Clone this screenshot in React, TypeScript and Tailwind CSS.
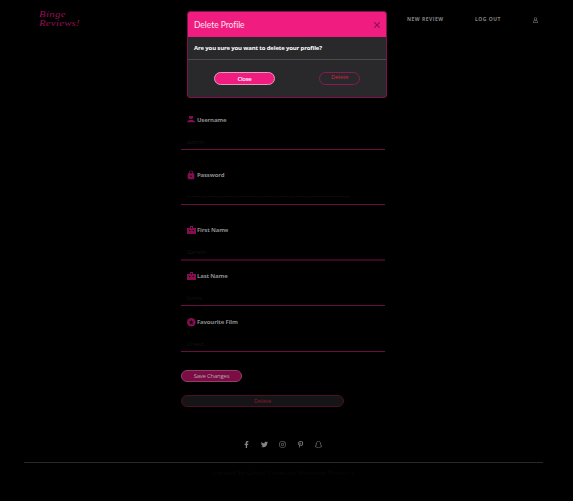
import type { ReactNode } from "react";
import { MdLock } from "react-icons/md";
import { FaFacebookF, FaTwitter, FaInstagram, FaPinterestP, FaRegUser, FaSnapchatGhost } from "react-icons/fa";

function PersonIcon() {
  return (
    <svg viewBox="0 0 8 8" className="h-2 w-2" fill="currentColor">
      <path d="M2 0h1.4l.6.6.6-.6H6v2L5 3H3L2 2zM0 6.2c0-1.7 2-2.2 4-2.2s4 .5 4 2.2z" />
    </svg>
  );
}

function BadgeIcon() {
  return (
    <svg viewBox="0 0 9 9" className="h-[9px] w-[9px]" fill="currentColor">
      <path fillRule="evenodd" d="M3 0h3v2h3v6H0V2h3zM4 1v1.5h1V1zM2 4v1h1.3V4zm3.7 0v1H7V4z" />
    </svg>
  );
}

function StarsIcon() {
  return (
    <svg viewBox="0 0 9 9" className="h-[9px] w-[9px]">
      <circle cx="4.3" cy="4.3" r="4.3" fill="currentColor" />
      <path d="M4.3 1.8l.7 1.6 1.8.1-1.4 1.2.4 1.8-1.5-1-1.5 1 .4-1.8-1.4-1.2 1.8-.1z" fill="black" />
    </svg>
  );
}

interface FieldProps {
  icon: ReactNode;
  label: string;
  value: string;
  gap: string;
  line: string;
}

function Field({ icon, label, value, gap, line }: FieldProps) {
  return (
    <div className={`w-[204px] ${gap}`}>
      <div className="flex h-[10px] items-center pl-[6px] text-[#850e4c]">
        <span className="flex w-[10px] shrink-0 items-center">{icon}</span>
        <span className="text-[6px] leading-[10px] font-bold tracking-[-0.17px] text-[#8a8a8a]">{label}</span>
      </div>
      <div className={`mt-[11px] overflow-hidden pl-[6px] text-[6px] leading-[13px] whitespace-nowrap text-[#131313] ${line}`}>
        {value}
      </div>
    </div>
  );
}

export default function App() {
  return (
    <div className="relative h-[501px] w-[573px] overflow-hidden bg-black font-['Open_Sans','Noto_Sans',sans-serif]">
      <header className="flex h-[38px] items-start justify-between pr-[35px] pl-[39px]">
        <div className="pt-[10px] font-['Liberation_Serif',serif] text-[9px] leading-[9px] text-[#960f55] italic">
          <div className="w-[34px] origin-left scale-x-[1.2] tracking-[0.3px]">Binge</div>
          <div className="w-[34px] origin-left scale-x-[1.2] tracking-[0.2px]">Reviews!</div>
        </div>
        <nav className="flex items-center pt-[15px] text-[5px] leading-[9px] font-bold tracking-[0.5px] text-[#858585]">
          <span className="w-[68px]">NEW REVIEW</span>
          <span className="w-[58px]">LOG OUT</span>
          <FaRegUser className="h-[6px] w-[5px]" />
        </nav>
      </header>

      <main className="flex flex-col pt-[77px] pl-[181px]">
        <Field icon={<PersonIcon />} label="Username" value="admin" gap="" line="h-[14px] border-b border-[#65103f]" />
        <Field icon={<MdLock size={10} className="-ml-px shrink-0" />} label="Password" value="••••••••••••••••••••••••••••••••••••••••••••••••••••••••••••••••••••••••" gap="mt-[20px]" line="h-[14px] border-b border-[#65103f]" />
        <Field icon={<BadgeIcon />} label="First Name" value="Gareth" gap="mt-[20px]" line="h-[15px] border-b-2 border-[#3a0822]" />
        <Field icon={<BadgeIcon />} label="Last Name" value="Jones" gap="mt-[10px]" line="h-[14px] border-b border-[#65103f]" />
        <Field icon={<StarsIcon />} label="Favourite Film" value="Creed" gap="mt-[11px]" line="h-[14px] border-b border-[#65103f]" />
        <button className="mt-[18px] h-[12px] w-[61px] rounded-full border border-[#8b4065] bg-[#7d0c45] text-[6px] leading-[11px] tracking-[-0.25px] text-[#aaa]">
          Save Changes
        </button>
        <button className="mt-[13px] ml-0 h-[12px] w-[163px] rounded-full border border-[#4d0d2d] bg-[#151515] text-[6px] leading-[11px] tracking-[-0.15px] text-[#8d1738]">
          Delete
        </button>
      </main>

      <footer className="mt-[34px] flex flex-col items-center text-[#858585]">
        <div className="mr-[8px] flex h-[7px] w-[79px] items-center justify-between">
          <FaFacebookF size={7} />
          <FaTwitter size={7} />
          <FaInstagram size={7} />
          <FaPinterestP size={7} />
          <FaSnapchatGhost size={7} className="fill-black stroke-[#858585] [stroke-width:45]" />
        </div>
        <div className="mt-[14px] mr-[6px] h-px w-[519px] bg-[#292929]" />
        <div className="mt-[6px] mr-[6px] text-[6px] leading-[9px] tracking-[0.1px] text-[#0a0a0a]">Created By Gethin Davies for Milestone Project 3</div>
      </footer>

      <section role="dialog" className="absolute top-[11px] left-[187px] flex h-[87px] w-[200px] flex-col overflow-hidden rounded-[3px] border border-[#82104d] bg-[#29292b]">
        <div className="flex h-[25px] shrink-0 items-center justify-between bg-[#f01c7f] pr-[6px] pl-[6px]">
          <h2 className="font-['Lato',sans-serif] text-[8.5px] leading-[10px] tracking-[-0.05px] text-[#ffe3ef]">Delete Profile</h2>
          <svg viewBox="0 0 6 6" className="h-[6px] w-[6px]" stroke="#8b1450" strokeWidth="1.2" fill="none">
            <path d="M.2.2l5.6 5.6M5.8.2L.2 5.8" />
          </svg>
        </div>
        <div className="h-[23px] shrink-0 border-b border-[#4b4b4d] pt-[6px] pl-[6px] text-[6px] leading-[10px] font-bold tracking-[-0.16px] text-white">
          Are you sure you want to delete your profile?
        </div>
        <div className="flex items-start justify-between pt-[12px] pr-[26px] pl-[26px]">
          <button className="h-[13px] w-[61px] rounded-full border border-[#d8a0ba] bg-[#f01c7f] pt-px text-[6px] leading-[10px] font-semibold tracking-[-0.3px] text-white">
            Close
          </button>
          <button className="flex h-[13px] w-[41px] justify-center rounded-full border border-[#8a1954] text-[6px] leading-[9px] tracking-[-0.15px] text-[#d8233f]">
            Delete
          </button>
        </div>
      </section>
    </div>
  );
}
